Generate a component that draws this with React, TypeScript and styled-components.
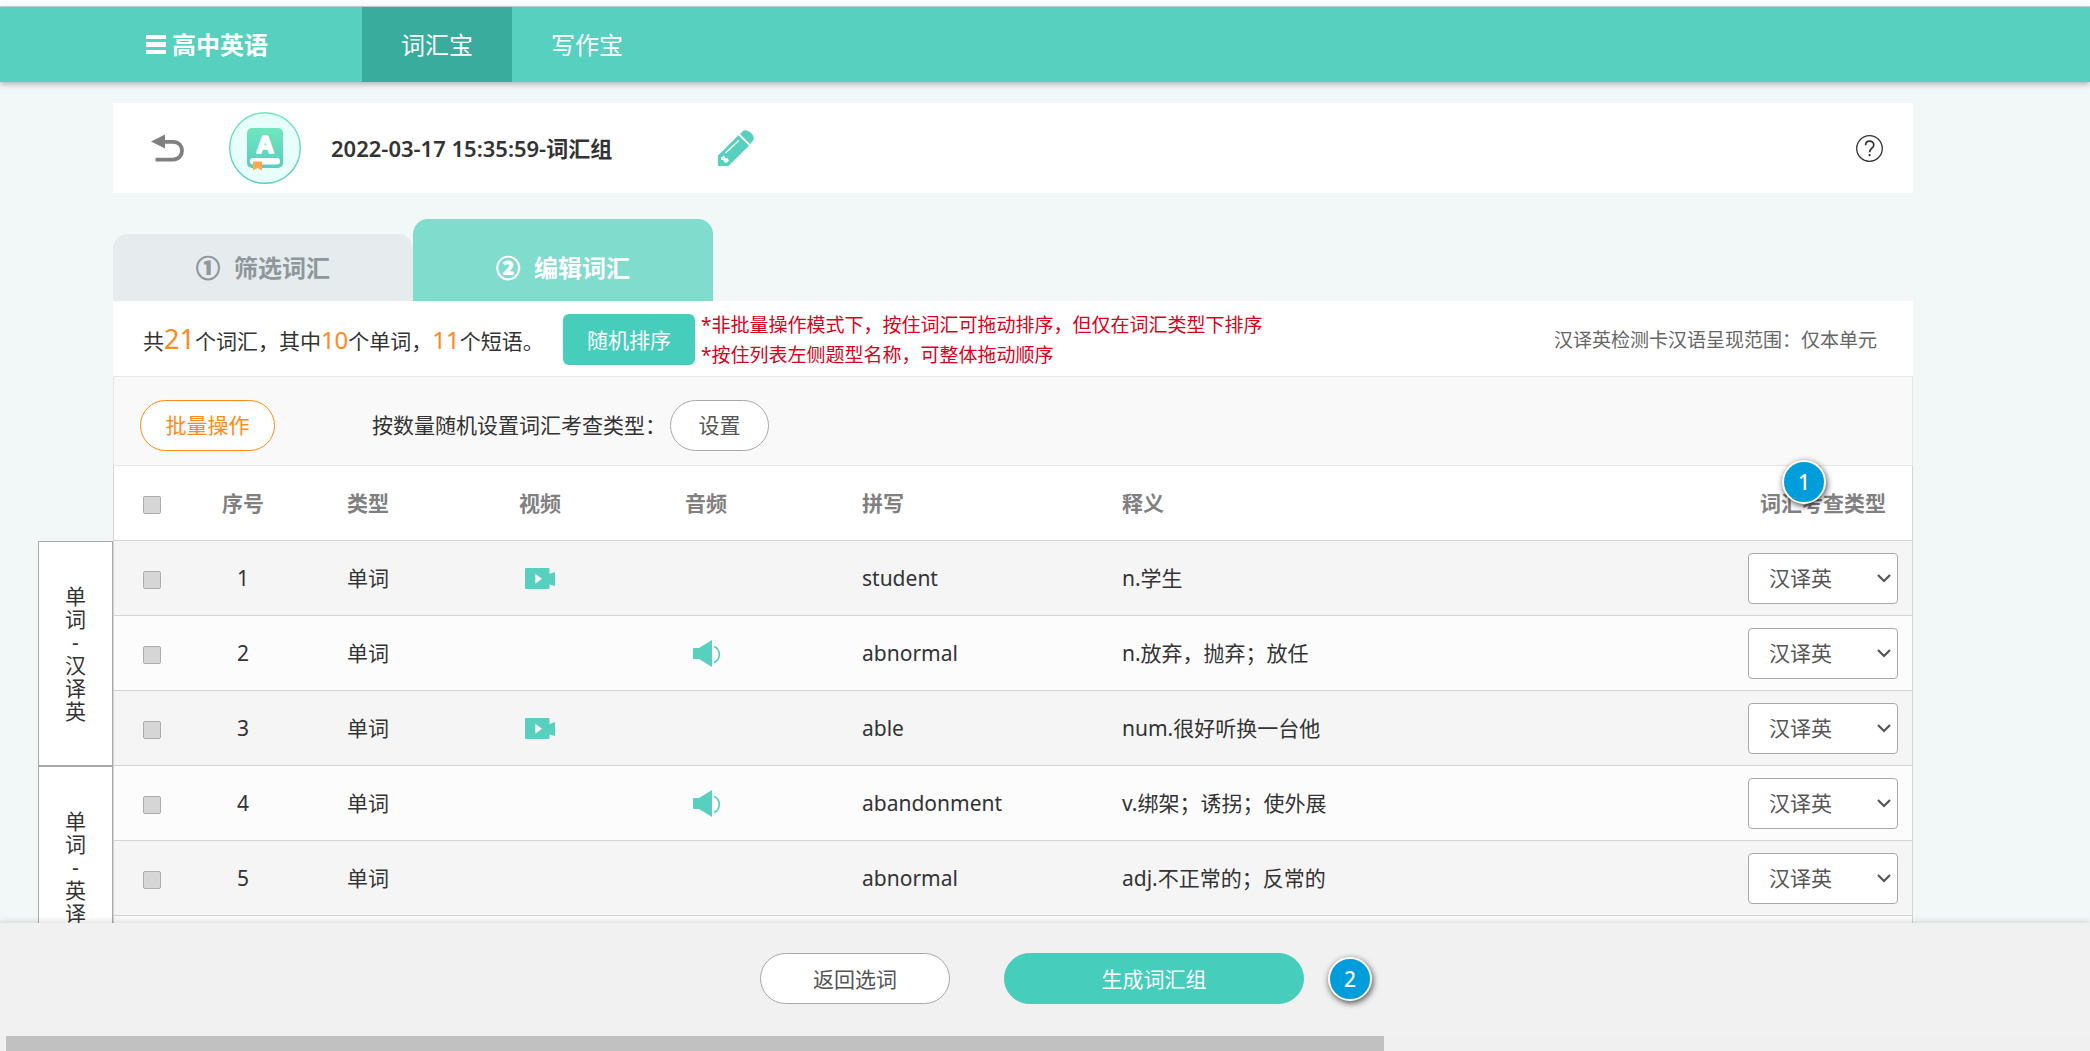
import React from "react";
import styled, { createGlobalStyle } from "styled-components";

const GlobalStyle = createGlobalStyle`
  *, *::before, *::after { box-sizing: border-box; }
  body {
    margin: 0;
    background: #f2f8f8;
    color: #333;
    font-family: "Noto Sans", "Noto Sans CJK SC", sans-serif;
    font-size: 21px;
    line-height: 30px;
  }
  button, input, select { font: inherit; margin: 0; }
  button { cursor: pointer; }
`;

const Page = styled.div`
  display: flex;
  flex-direction: column;
  height: 100vh;
  overflow: hidden;
`;

const TopStrip = styled.div`
  flex: none;
  height: 7px;
  background: #fff;
  border-bottom: 1px solid #d3d6da;
`;

const Header = styled.header`
  flex: none;
  display: flex;
  height: 75px;
  padding-left: 146px;
  background: #58d0c0;
  box-shadow: 0 2px 6px rgba(0, 0, 0, 0.3);
  z-index: 1;
`;

const Brand = styled.button`
  display: flex;
  align-items: center;
  gap: 6px;
  width: 216px;
  padding: 0;
  border: 0;
  background: none;
  color: #fff;
  font-size: 24px;
  font-weight: 700;
`;

const Nav = styled.nav`
  display: flex;
`;

const NavLink = styled.a<{ $active?: boolean }>`
  display: flex;
  align-items: center;
  justify-content: center;
  width: 150px;
  background: ${(p) => (p.$active ? "#3aac9d" : "transparent")};
  color: #fff;
  font-size: 24px;
  text-decoration: none;
`;

const Main = styled.main`
  flex: 1;
  min-height: 0;
  overflow: hidden;
  display: grid;
  grid-template-columns: 75px minmax(0, 1fr);
  align-content: start;
  padding: 21px 177px 0 38px;
`;

const Wide = styled.div`
  grid-column: 2;
`;

const TitleCard = styled.section`
  display: flex;
  align-items: center;
  height: 90px;
  padding: 0 30px 0 38px;
  background: #fff;
`;

const IconButton = styled.button`
  display: flex;
  padding: 0;
  border: 0;
  background: none;
`;

const Logo = styled.svg`
  margin: 0 30px 0 45px;
`;

const Title = styled.h1`
  margin: 0;
  min-width: 387px;
  font-size: 22px;
  font-weight: 600;
`;

const HelpButton = styled(IconButton)`
  margin-left: auto;
`;

const Tabs = styled.div`
  display: flex;
  align-items: flex-end;
  height: 82px;
  margin-top: 26px;
`;

const Tab = styled.button<{ $active?: boolean }>`
  display: flex;
  align-items: center;
  justify-content: center;
  gap: 14px;
  width: 300px;
  height: ${(p) => (p.$active ? "82px" : "67px")};
  padding: ${(p) => (p.$active ? "15px" : "0")} 0 0;
  border: 0;
  border-radius: 15px 15px 0 0;
  background: ${(p) => (p.$active ? "#80dccd" : "#e6ebed")};
  color: ${(p) => (p.$active ? "#fff" : "#8e979b")};
  font-size: 24px;
  font-weight: 700;
`;

const StepNumber = styled.span`
  -webkit-text-stroke: 1px currentColor;
`;

const Summary = styled.section`
  display: flex;
  align-items: center;
  height: 75px;
  padding: 2px 36px 0 30px;
  background: #fff;
`;

const Counts = styled.p`
  margin: 0;
  min-width: 420px;
`;

const Count = styled.strong<{ $large?: boolean }>`
  color: #ff8a1a;
  font-size: ${(p) => (p.$large ? "27px" : "24px")};
  font-weight: 400;
`;

const ShuffleButton = styled.button`
  flex: none;
  width: 132px;
  height: 51px;
  padding: 0;
  border: 0;
  border-radius: 6px;
  background: #46cdbb;
  color: #fff;
`;

const Notes = styled.p`
  margin: 0 0 0 6px;
  color: #d9001b;
  font-size: 19px;
`;

const Scope = styled.p`
  margin: 0 0 0 auto;
  color: #666;
  font-size: 19px;
`;

const FilterBar = styled.section`
  display: flex;
  align-items: center;
  height: 90px;
  padding: 8px 26px 0;
  border: 1px solid #e6e6e6;
  background: #f9f9f9;
`;

const PillButton = styled.button<{ $width: number; $tone?: "accent" | "primary" }>`
  width: ${(p) => p.$width}px;
  height: 51px;
  padding: 0;
  border: 1px solid
    ${(p) => (p.$tone === "accent" ? "#ff8a1a" : p.$tone === "primary" ? "#46cdbb" : "#a9a9a9")};
  border-radius: 26px;
  background: ${(p) => (p.$tone === "primary" ? "#46cdbb" : "#fff")};
  color: ${(p) => (p.$tone === "accent" ? "#ff8a1a" : p.$tone === "primary" ? "#fff" : "#555")};
`;

const FilterLabel = styled.span`
  width: 298px;
  margin-left: 97px;
`;

const SideList = styled.aside`
  grid-column: 1;
  padding-top: 75px;
`;

const SideLabel = styled.div`
  display: flex;
  align-items: center;
  justify-content: center;
  height: 225px;
  border: 1px solid #a9a9a9;
  background: #fff;
`;

const SideText = styled.span`
  width: 21px;
  line-height: 23px;
  text-align: center;
  word-break: break-all;
  line-break: anywhere;
`;

const Table = styled.table`
  width: 100%;
  table-layout: fixed;
  border-collapse: separate;
  border-spacing: 0;
  border: solid #d3d5d5;
  border-width: 0 1px;
  background: #fff;
`;

const Col = styled.col<{ $width?: number }>`
  width: ${(p) => (p.$width ? `${p.$width}px` : "auto")};
`;

const HeadCell = styled.th<{ $left?: boolean }>`
  height: 75px;
  padding: 0 0 0 ${(p) => (p.$left ? "90px" : "0")};
  border-bottom: 1px solid #d3d5d5;
  color: #808080;
  font-weight: 700;
  text-align: ${(p) => (p.$left ? "left" : "center")};
`;

const BadgeAnchor = styled.div`
  position: relative;
`;

const Row = styled.tr`
  background: #fcfcfc;
  &:nth-child(odd) { background: #f5f5f5; }
`;

const Cell = styled.td<{ $left?: boolean }>`
  height: 75px;
  padding: 0 0 0 ${(p) => (p.$left ? "90px" : "0")};
  border-bottom: 1px solid #d3d5d5;
  text-align: ${(p) => (p.$left ? "left" : "center")};
  white-space: nowrap;
  svg { display: block; margin: 0 auto; }
`;

const Checkbox = styled.input`
  appearance: none;
  display: block;
  width: 18px;
  height: 18px;
  margin: 3px auto 0;
  border: 1px solid #adadad;
  border-radius: 2px;
  background: #d6d6d6;
`;

const SelectBox = styled.span`
  position: relative;
  display: inline-block;
  vertical-align: middle;
  svg {
    position: absolute;
    top: 21px;
    right: 7px;
    pointer-events: none;
  }
`;

const Select = styled.select`
  appearance: none;
  display: block;
  width: 150px;
  height: 51px;
  padding: 0 20px;
  border: 1px solid #a9a9a9;
  border-radius: 4px;
  background: #fff;
  color: #555;
`;

const StepBadge = styled.span`
  display: flex;
  align-items: center;
  justify-content: center;
  width: 44px;
  height: 44px;
  border: 2px solid #fff;
  border-radius: 50%;
  background: #009ddb;
  box-shadow: 1px 2px 6px rgba(0, 0, 0, 0.7);
  color: #fff;
  font-size: 21px;
  font-weight: 500;
`;

const FloatingBadge = styled(StepBadge)`
  position: absolute;
  top: -28px;
  left: 50%;
  margin-left: -41px;
`;

const Footer = styled.footer`
  flex: none;
  background: #f1f1f1;
  box-shadow: 0 -2px 6px rgba(0, 0, 0, 0.12);
  z-index: 1;
`;

const Actions = styled.div`
  display: flex;
  align-items: center;
  justify-content: center;
  height: 113px;
  padding: 0 0 2px 42px;
`;

const GenerateGroup = styled.div`
  display: flex;
  align-items: center;
  gap: 24px;
  margin-left: 54px;
`;

const ScrollTrack = styled.div`
  height: 15px;
  padding-left: 6px;
  background: #f0f0f0;
`;

const ScrollThumb = styled.div`
  width: 66.1%;
  height: 15px;
  background: #c1c1c1;
`;

const MenuIcon = () => (
  <svg width="20" height="20" viewBox="0 0 20 20" fill="#fff" aria-hidden="true">
    <rect y="0" width="20" height="4" />
    <rect y="7" width="20" height="5" />
    <rect y="15" width="20" height="4" />
  </svg>
);

const BackIcon = () => (
  <svg width="33" height="28" viewBox="0 0 33 28" fill="none" aria-hidden="true">
    <path d="M0 7.5 L14 0.5 V14.5 Z" fill="#808080" />
    <path d="M13 7.8 H22 C34 7.8 34 25.6 22 25.6 H4.5" stroke="#808080" strokeWidth="3.8" />
  </svg>
);

const BookLogo = () => (
  <Logo width="72" height="72" viewBox="0 0 72 72" role="img" aria-label="词汇宝">
    <defs>
      <linearGradient id="ring" x1="0" y1="0" x2="0" y2="1">
        <stop offset="0" stopColor="#70e6bd" />
        <stop offset="1" stopColor="#5bcdc2" />
      </linearGradient>
    </defs>
    <circle cx="36" cy="36" r="35.3" fill="#e8fefa" stroke="url(#ring)" strokeWidth="1.4" />
    <rect x="18" y="16" width="36" height="40" rx="5" fill="url(#ring)" />
    <rect x="21" y="46" width="30" height="6.5" rx="3" fill="#fff" />
    <text
      x="36"
      y="41"
      textAnchor="middle"
      fontFamily="Noto Sans, sans-serif"
      fontSize="24"
      fontWeight="700"
      fill="#fff"
      stroke="#fff"
      strokeWidth="1.6"
      strokeLinejoin="round"
    >
      A
    </text>
    <path d="M24 49.5 H33 V58.5 L28.5 56 L24 58.5 Z" fill="#ffa64a" />
  </Logo>
);

const PencilIcon = () => (
  <svg width="36" height="36" viewBox="0 0 36 36" aria-hidden="true">
    <path d="M0 25.5 L20.5 5.3 L31 15.7 L10.5 36 H0 Z" fill="#58d0c0" />
    <path
      d="M22 4 L24.6 1.4 Q26.5 -0.6 29.5 0.8 Q34.5 3 35.8 7.5 Q36.2 9.5 34.6 11.2 L32 14 Z"
      fill="#58d0c0"
    />
    <path d="M7.5 23 L20.8 10.6" stroke="#fff" strokeWidth="1.4" />
    <path d="M3 27.5 L6 25.5 L7.5 28 L10 28.5 L10.8 31 L8 33.3 L5.8 31.8 L5.5 30 L3 29.8 Z" fill="#fff" />
  </svg>
);

const HelpIcon = () => (
  <svg width="27" height="27" viewBox="0 0 27 27" fill="none" stroke="#333" aria-hidden="true">
    <circle cx="13.5" cy="13.5" r="12.8" strokeWidth="1.3" />
    <path
      d="M9.6 10.2 C9.6 4.9 17.8 4.9 17.8 10 C17.8 13.2 13.6 13.2 13.6 17.3"
      strokeWidth="1.7"
    />
    <circle cx="13.6" cy="20.2" r="1.1" fill="#333" stroke="none" />
  </svg>
);

const VideoIcon = () => (
  <svg width="30" height="21" viewBox="0 0 30 21" role="img" aria-label="播放视频">
    <path
      fill="#58d0c0"
      fillRule="evenodd"
      d="M1 0 H23.5 Q24.5 0 24.5 1 V6 L30 4 V18 L24.5 16.5 V20 Q24.5 21 23.5 21 H1 Q0 21 0 20 V1 Q0 0 1 0 Z M10.3 5.8 V15.8 L17 10.8 Z"
    />
  </svg>
);

const SpeakerIcon = () => (
  <svg width="27" height="27" viewBox="0 0 27 27" role="img" aria-label="播放音频">
    <path fill="#58d0c0" d="M1 8 H6 L19 0 V27 L6 19 H1 Q0 19 0 18 V9 Q0 8 1 8 Z" />
    <path d="M21 6.6 C28 9.5 28 19.5 21 22.4" fill="none" stroke="#58d0c0" strokeWidth="1.6" />
  </svg>
);

const ChevronIcon = () => (
  <svg width="14" height="9" viewBox="0 0 14 9" fill="none" aria-hidden="true">
    <path d="M1 1 L7 7 L13 1" stroke="#555" strokeWidth="2.2" />
  </svg>
);

type Media = "video" | "audio" | null;

const words: { id: number; media: Media; spelling: string; meaning: string }[] = [
  { id: 1, media: "video", spelling: "student", meaning: "n.学生" },
  { id: 2, media: "audio", spelling: "abnormal", meaning: "n.放弃，抛弃；放任" },
  { id: 3, media: "video", spelling: "able", meaning: "num.很好听换一台他" },
  { id: 4, media: "audio", spelling: "abandonment", meaning: "v.绑架；诱拐；使外展" },
  { id: 5, media: null, spelling: "abnormal", meaning: "adj.不正常的；反常的" },
];

const columnWidths = [76, 106, 144, 200, 132, 260, undefined, 178];

export default function App() {
  return (
    <Page>
      <GlobalStyle />
      <TopStrip />
      <Header>
        <Brand type="button">
          <MenuIcon />
          高中英语
        </Brand>
        <Nav>
          <NavLink href="#words" $active>词汇宝</NavLink>
          <NavLink href="#writing">写作宝</NavLink>
        </Nav>
      </Header>

      <Main>
        <Wide>
          <TitleCard>
            <IconButton type="button" aria-label="返回">
              <BackIcon />
            </IconButton>
            <BookLogo />
            <Title>2022-03-17 15:35:59-词汇组</Title>
            <IconButton type="button" aria-label="编辑名称">
              <PencilIcon />
            </IconButton>
            <HelpButton type="button" aria-label="帮助">
              <HelpIcon />
            </HelpButton>
          </TitleCard>

          <Tabs>
            <Tab type="button">
              <StepNumber>①</StepNumber>
              <span>筛选词汇</span>
            </Tab>
            <Tab type="button" $active>
              <StepNumber>②</StepNumber>
              <span>编辑词汇</span>
            </Tab>
          </Tabs>

          <Summary>
            <Counts>
              共<Count $large>21</Count>个词汇，其中<Count>10</Count>个单词，<Count>11</Count>个短语。
            </Counts>
            <ShuffleButton type="button">随机排序</ShuffleButton>
            <Notes>
              *非批量操作模式下，按住词汇可拖动排序，但仅在词汇类型下排序
              <br />
              *按住列表左侧题型名称，可整体拖动顺序
            </Notes>
            <Scope>汉译英检测卡汉语呈现范围：仅本单元</Scope>
          </Summary>

          <FilterBar>
            <PillButton type="button" $width={135} $tone="accent">批量操作</PillButton>
            <FilterLabel>按数量随机设置词汇考查类型：</FilterLabel>
            <PillButton type="button" $width={99}>设置</PillButton>
          </FilterBar>
        </Wide>

        <SideList>
          <SideLabel><SideText>单词-汉译英</SideText></SideLabel>
          <SideLabel><SideText>单词-英译汉</SideText></SideLabel>
        </SideList>

        <Table>
          <colgroup>
            {columnWidths.map((width, i) => (
              <Col key={i} $width={width} />
            ))}
          </colgroup>
          <thead>
            <tr>
              <HeadCell><Checkbox type="checkbox" aria-label="全选" /></HeadCell>
              <HeadCell>序号</HeadCell>
              <HeadCell>类型</HeadCell>
              <HeadCell>视频</HeadCell>
              <HeadCell>音频</HeadCell>
              <HeadCell $left>拼写</HeadCell>
              <HeadCell $left>释义</HeadCell>
              <HeadCell>
                <BadgeAnchor>
                  词汇考查类型
                  <FloatingBadge>1</FloatingBadge>
                </BadgeAnchor>
              </HeadCell>
            </tr>
          </thead>
          <tbody>
            {words.map((word) => (
              <Row key={word.id}>
                <Cell><Checkbox type="checkbox" aria-label={`选择 ${word.spelling}`} /></Cell>
                <Cell>{word.id}</Cell>
                <Cell>单词</Cell>
                <Cell>{word.media === "video" && <VideoIcon />}</Cell>
                <Cell>{word.media === "audio" && <SpeakerIcon />}</Cell>
                <Cell $left>{word.spelling}</Cell>
                <Cell $left>{word.meaning}</Cell>
                <Cell>
                  <SelectBox>
                    <Select aria-label={`${word.spelling} 考查类型`} defaultValue="zh-en">
                      <option value="zh-en">汉译英</option>
                      <option value="en-zh">英译汉</option>
                    </Select>
                    <ChevronIcon />
                  </SelectBox>
                </Cell>
              </Row>
            ))}
            <Row>
              <Cell colSpan={8} />
            </Row>
          </tbody>
        </Table>
      </Main>

      <Footer>
        <Actions>
          <PillButton type="button" $width={190}>返回选词</PillButton>
          <GenerateGroup>
            <PillButton type="button" $width={300} $tone="primary">生成词汇组</PillButton>
            <StepBadge>2</StepBadge>
          </GenerateGroup>
        </Actions>
        <ScrollTrack>
          <ScrollThumb />
        </ScrollTrack>
      </Footer>
    </Page>
  );
}
